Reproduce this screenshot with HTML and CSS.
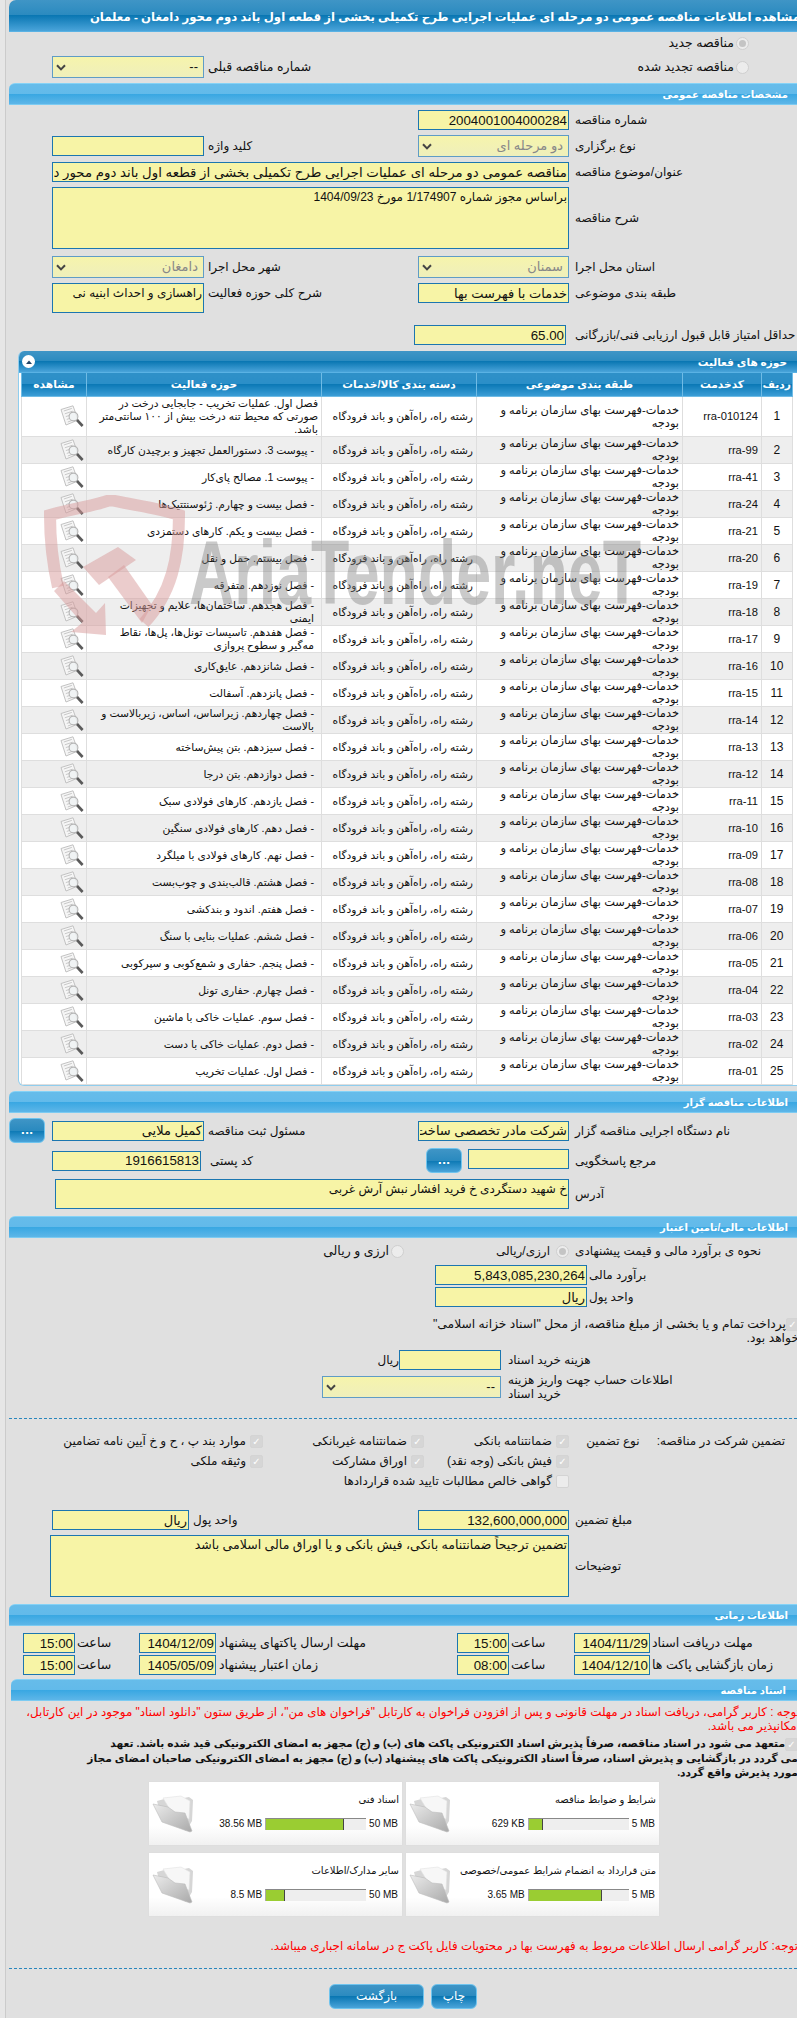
FILE: index.html
```html
<!DOCTYPE html>
<html lang="fa" dir="rtl">
<head>
<meta charset="utf-8">
<title>مشاهده اطلاعات مناقصه</title>
<link rel="stylesheet" href="styles.css">
</head>
<body>
<svg class="defs" width="0" height="0" aria-hidden="true">
  <defs>
    <linearGradient id="fg" x1="0" y1="0" x2="1" y2="1"><stop offset="0" stop-color="#ececec"/><stop offset="1" stop-color="#a9a9a9"/></linearGradient>
    <symbol id="chev" viewBox="0 0 10 7"><path d="M1 1.2 5 5.4 9 1.2" fill="none" stroke="#444" stroke-width="2"/></symbol>
    <symbol id="glass" viewBox="0 0 24 23">
      <path d="M1 4.5 13 .8 18 15 6 20Z" fill="#f6f6f6" stroke="#c2c2c2"/>
      <path d="M3.8 6 11.8 3.4M4.8 8.8 12.6 6.2M5.8 11.6 9.4 10.4M6.8 14.4 9.6 13.5M7.8 17 12 15.5" stroke="#c8c8c8" fill="none"/>
      <circle cx="13.5" cy="11.5" r="4.4" fill="#eef2f3" fill-opacity=".75" stroke="#b4b4b4" stroke-width="1.1"/>
      <path d="M17 15 22.6 21" stroke="#5a5a5a" stroke-width="2.6"/>
    </symbol>
    <symbol id="folder" viewBox="0 0 42 38">
      <path d="M5 6 16 3 22 5 37 2 41 5 40 26 34 36 9 22Z" fill="#d6d6d6"/>
      <path d="M11 3 29 1 38 6 37 24 20 18Z" fill="#f7f7f7" stroke="#e2e2e2" stroke-width=".6"/>
      <path d="M1 9 16 12 23 17 33 18 40 36 38 37 10 27Z" fill="url(#fg)" stroke="#bcbcbc" stroke-width=".6"/>
    </symbol>
  </defs>
</svg>
<div class="shell">
<main class="wrap">
  <h1 class="bar bar-dark title">مشاهده اطلاعات مناقصه عمومی دو مرحله ای عملیات اجرایی طرح تکمیلی بخشی از قطعه اول باند دوم محور دامغان - معلمان</h1>

  <div class="row radio-first"><span class="rd on"></span><span class="rd-text">مناقصه جدید</span></div>
  <div class="row radio-second">
    <span class="rd"></span><span class="rd-text">مناقصه تجدید شده</span>
    <div class="prev">
      <span class="rd-label">شماره مناقصه قبلی</span>
      <div class="select w152"><span>--</span><svg><use href="#chev"/></svg></div>
    </div>
  </div>

  <h2 class="bar bar-light sect-first">مشخصات مناقصه عمومی</h2>

  <div class="row m5"><label class="lb">شماره مناقصه</label><input class="in w151 num" readonly value="2004001004000284"></div>
  <div class="row m5"><label class="lb">نوع برگزاری</label><div class="select w151 off"><span>دو مرحله ای</span><svg><use href="#chev"/></svg></div><label class="lb2">کلید واژه</label><input class="in w152" readonly></div>
  <div class="row m5"><label class="lb">عنوان/موضوع مناقصه</label><input class="in w517 subject" readonly value="مناقصه عمومی دو مرحله ای عملیات اجرایی طرح تکمیلی بخشی از قطعه اول باند دوم محور دامغان - معلمان"></div>
  <div class="row m5"><label class="lb">شرح مناقصه</label><textarea class="in w517 h62" readonly>براساس مجوز شماره 1/174907 مورخ 1404/09/23</textarea></div>
  <div class="row m7"><label class="lb">استان محل اجرا</label><div class="select w151 off"><span>سمنان</span><svg><use href="#chev"/></svg></div><label class="lb2">شهر محل اجرا</label><div class="select w152 off"><span>دامغان</span><svg><use href="#chev"/></svg></div></div>
  <div class="row m5 top"><label class="lb">طبقه بندی موضوعی</label><input class="in w151" readonly value="خدمات با فهرست بها"><label class="lb2">شرح کلی حوزه فعالیت</label><textarea class="in w152 h30" readonly>راهسازی و احداث ابنیه نی</textarea></div>
  <div class="row m12"><label class="lb score-lb">حداقل امتیاز قابل قبول ارزیابی فنی/بازرگانی</label><input class="in w152 num" readonly value="65.00"></div>

  <section class="panel">
    <div class="bar-dark panel-head"><span>حوزه های فعالیت</span><span class="toggle"><svg viewBox="0 0 8 6" width="8" height="6"><path d="M1 5 4 1.5 7 5Z" fill="#246"/></svg></span></div>
    <table class="grid">
      <colgroup><col class="c1"><col class="c2"><col class="c3"><col class="c4"><col class="c5"><col class="c6"></colgroup>
      <thead><tr><th>ردیف</th><th>کدخدمت</th><th>طبقه بندی موضوعی</th><th>دسته بندی کالا/خدمات</th><th>حوزه فعالیت</th><th>مشاهده</th></tr></thead>
      <tbody>
        <tr><td class="n">1</td><td class="code">rra-010124</td><td>خدمات-فهرست بهای سازمان برنامه و<br>بودجه</td><td>رشته راه، راه‌آهن و باند فرودگاه</td><td>فصل اول. عملیات تخریب - جابجایی درخت در<br>صورتی که محیط تنه درخت بیش از ۱۰۰ سانتی‌متر<br>باشد.</td><td class="ic"><svg><use href="#glass"/></svg></td></tr>
        <tr><td class="n">2</td><td class="code">rra-99</td><td>خدمات-فهرست بهای سازمان برنامه و<br>بودجه</td><td>رشته راه، راه‌آهن و باند فرودگاه</td><td class="a">- پیوست 3. دستورالعمل تجهیز و برچیدن کارگاه</td><td class="ic"><svg><use href="#glass"/></svg></td></tr>
        <tr><td class="n">3</td><td class="code">rra-41</td><td>خدمات-فهرست بهای سازمان برنامه و<br>بودجه</td><td>رشته راه، راه‌آهن و باند فرودگاه</td><td class="a">- پیوست 1. مصالح پای‌کار</td><td class="ic"><svg><use href="#glass"/></svg></td></tr>
        <tr><td class="n">4</td><td class="code">rra-24</td><td>خدمات-فهرست بهای سازمان برنامه و<br>بودجه</td><td>رشته راه، راه‌آهن و باند فرودگاه</td><td class="a">- فصل بیست و چهارم. ژئوسنتتیک‌ها</td><td class="ic"><svg><use href="#glass"/></svg></td></tr>
        <tr><td class="n">5</td><td class="code">rra-21</td><td>خدمات-فهرست بهای سازمان برنامه و<br>بودجه</td><td>رشته راه، راه‌آهن و باند فرودگاه</td><td class="a">- فصل بیست و یکم. کارهای دستمزدی</td><td class="ic"><svg><use href="#glass"/></svg></td></tr>
        <tr><td class="n">6</td><td class="code">rra-20</td><td>خدمات-فهرست بهای سازمان برنامه و<br>بودجه</td><td>رشته راه، راه‌آهن و باند فرودگاه</td><td class="a">- فصل بیستم. حمل و نقل</td><td class="ic"><svg><use href="#glass"/></svg></td></tr>
        <tr><td class="n">7</td><td class="code">rra-19</td><td>خدمات-فهرست بهای سازمان برنامه و<br>بودجه</td><td>رشته راه، راه‌آهن و باند فرودگاه</td><td class="a">- فصل نوزدهم. متفرقه</td><td class="ic"><svg><use href="#glass"/></svg></td></tr>
        <tr><td class="n">8</td><td class="code">rra-18</td><td>خدمات-فهرست بهای سازمان برنامه و<br>بودجه</td><td>رشته راه، راه‌آهن و باند فرودگاه</td><td class="w">- فصل هجدهم. ساختمان‌ها، علایم و تجهیزات<br>ایمنی</td><td class="ic"><svg><use href="#glass"/></svg></td></tr>
        <tr><td class="n">9</td><td class="code">rra-17</td><td>خدمات-فهرست بهای سازمان برنامه و<br>بودجه</td><td>رشته راه، راه‌آهن و باند فرودگاه</td><td class="w">- فصل هفدهم. تاسیسات تونل‌ها، پل‌ها، نقاط<br>مه‌گیر و سطوح پروازی</td><td class="ic"><svg><use href="#glass"/></svg></td></tr>
        <tr><td class="n">10</td><td class="code">rra-16</td><td>خدمات-فهرست بهای سازمان برنامه و<br>بودجه</td><td>رشته راه، راه‌آهن و باند فرودگاه</td><td class="a">- فصل شانزدهم. عایق‌کاری</td><td class="ic"><svg><use href="#glass"/></svg></td></tr>
        <tr><td class="n">11</td><td class="code">rra-15</td><td>خدمات-فهرست بهای سازمان برنامه و<br>بودجه</td><td>رشته راه، راه‌آهن و باند فرودگاه</td><td class="a">- فصل پانزدهم. آسفالت</td><td class="ic"><svg><use href="#glass"/></svg></td></tr>
        <tr><td class="n">12</td><td class="code">rra-14</td><td>خدمات-فهرست بهای سازمان برنامه و<br>بودجه</td><td>رشته راه، راه‌آهن و باند فرودگاه</td><td class="w">- فصل چهاردهم. زیراساس، اساس، زیربالاست و<br>بالاست</td><td class="ic"><svg><use href="#glass"/></svg></td></tr>
        <tr><td class="n">13</td><td class="code">rra-13</td><td>خدمات-فهرست بهای سازمان برنامه و<br>بودجه</td><td>رشته راه، راه‌آهن و باند فرودگاه</td><td class="a">- فصل سیزدهم. بتن پیش‌ساخته</td><td class="ic"><svg><use href="#glass"/></svg></td></tr>
        <tr><td class="n">14</td><td class="code">rra-12</td><td>خدمات-فهرست بهای سازمان برنامه و<br>بودجه</td><td>رشته راه، راه‌آهن و باند فرودگاه</td><td class="a">- فصل دوازدهم. بتن درجا</td><td class="ic"><svg><use href="#glass"/></svg></td></tr>
        <tr><td class="n">15</td><td class="code">rra-11</td><td>خدمات-فهرست بهای سازمان برنامه و<br>بودجه</td><td>رشته راه، راه‌آهن و باند فرودگاه</td><td class="a">- فصل یازدهم. کارهای فولادی سبک</td><td class="ic"><svg><use href="#glass"/></svg></td></tr>
        <tr><td class="n">16</td><td class="code">rra-10</td><td>خدمات-فهرست بهای سازمان برنامه و<br>بودجه</td><td>رشته راه، راه‌آهن و باند فرودگاه</td><td class="a">- فصل دهم. کارهای فولادی سنگین</td><td class="ic"><svg><use href="#glass"/></svg></td></tr>
        <tr><td class="n">17</td><td class="code">rra-09</td><td>خدمات-فهرست بهای سازمان برنامه و<br>بودجه</td><td>رشته راه، راه‌آهن و باند فرودگاه</td><td class="a">- فصل نهم. کارهای فولادی با میلگرد</td><td class="ic"><svg><use href="#glass"/></svg></td></tr>
        <tr><td class="n">18</td><td class="code">rra-08</td><td>خدمات-فهرست بهای سازمان برنامه و<br>بودجه</td><td>رشته راه، راه‌آهن و باند فرودگاه</td><td class="a">- فصل هشتم. قالب‌بندی و چوب‌بست</td><td class="ic"><svg><use href="#glass"/></svg></td></tr>
        <tr><td class="n">19</td><td class="code">rra-07</td><td>خدمات-فهرست بهای سازمان برنامه و<br>بودجه</td><td>رشته راه، راه‌آهن و باند فرودگاه</td><td class="a">- فصل هفتم. اندود و بندکشی</td><td class="ic"><svg><use href="#glass"/></svg></td></tr>
        <tr><td class="n">20</td><td class="code">rra-06</td><td>خدمات-فهرست بهای سازمان برنامه و<br>بودجه</td><td>رشته راه، راه‌آهن و باند فرودگاه</td><td class="a">- فصل ششم. عملیات بنایی با سنگ</td><td class="ic"><svg><use href="#glass"/></svg></td></tr>
        <tr><td class="n">21</td><td class="code">rra-05</td><td>خدمات-فهرست بهای سازمان برنامه و<br>بودجه</td><td>رشته راه، راه‌آهن و باند فرودگاه</td><td class="a">- فصل پنجم. حفاری و شمع‌کوبی و سپرکوبی</td><td class="ic"><svg><use href="#glass"/></svg></td></tr>
        <tr><td class="n">22</td><td class="code">rra-04</td><td>خدمات-فهرست بهای سازمان برنامه و<br>بودجه</td><td>رشته راه، راه‌آهن و باند فرودگاه</td><td class="a">- فصل چهارم. حفاری تونل</td><td class="ic"><svg><use href="#glass"/></svg></td></tr>
        <tr><td class="n">23</td><td class="code">rra-03</td><td>خدمات-فهرست بهای سازمان برنامه و<br>بودجه</td><td>رشته راه، راه‌آهن و باند فرودگاه</td><td class="a">- فصل سوم. عملیات خاکی با ماشین</td><td class="ic"><svg><use href="#glass"/></svg></td></tr>
        <tr><td class="n">24</td><td class="code">rra-02</td><td>خدمات-فهرست بهای سازمان برنامه و<br>بودجه</td><td>رشته راه، راه‌آهن و باند فرودگاه</td><td class="a">- فصل دوم. عملیات خاکی با دست</td><td class="ic"><svg><use href="#glass"/></svg></td></tr>
        <tr><td class="n">25</td><td class="code">rra-01</td><td>خدمات-فهرست بهای سازمان برنامه و<br>بودجه</td><td>رشته راه، راه‌آهن و باند فرودگاه</td><td class="a">- فصل اول. عملیات تخریب</td><td class="ic"><svg><use href="#glass"/></svg></td></tr>
      </tbody>
    </table>
  </section>

  <h2 class="bar bar-light m5">اطلاعات مناقصه گزار</h2>
  <div class="row m5 h25"><label class="lb">نام دستگاه اجرایی مناقصه گزار</label><input class="in w151" readonly value="شرکت مادر تخصصی ساخت و توسعه"><label class="lb2">مسئول ثبت مناقصه</label><input class="in w152" readonly value="کمیل ملایی"><button class="btn dots gap7">...</button></div>
  <div class="row m5 h25"><label class="lb">مرجع پاسخگویی</label><input class="in w101 up" readonly><button class="btn dots gap6">...</button><label class="lb-post">کد پستی</label><input class="in w149 num" readonly value="1916615813"></div>
  <div class="row m6 top"><label class="lb lb-addr">آدرس</label><textarea class="in w514 h30" readonly>خ شهید دستگردی خ فرید افشار نبش آرش غربی</textarea></div>

  <h2 class="bar bar-light m7">اطلاعات مالی/تامین اعتبار</h2>
  <div class="row m6 h14"><label class="lb">نحوه ی برآورد مالی و قیمت پیشنهادی</label><span class="rd on rd-a"></span><span class="rd-mid">ارزی/ریالی</span><span class="rd"></span><span class="rd-text">ارزی و ریالی</span></div>
  <div class="row m7"><label class="lb3">برآورد مالی</label><input class="in w152 num" readonly value="5,843,085,230,264"></div>
  <div class="row m2"><label class="lb3">واحد پول</label><input class="in w152" readonly value="ریال"></div>
  <p class="pay"><span class="cb on">✓</span>پرداخت تمام و یا بخشی از مبلغ مناقصه، از محل "اسناد خزانه اسلامی"<br>خواهد بود.</p>
  <div class="row m5"><label class="lb4">هزینه خرید اسناد</label><input class="in w102" readonly><span class="unit">ریال</span></div>
  <div class="row m3"><label class="lb4 two">اطلاعات حساب جهت واریز هزینه<br>خرید اسناد</label><div class="select w179"><span>--</span><svg><use href="#chev"/></svg></div></div>

  <hr class="dash d1">

  <div class="row opts first">
    <div class="opt-head"><span>تضمین شرکت در مناقصه:</span><span class="kind">نوع تضمین</span></div>
    <div class="opt o1"><span class="cb on">✓</span>ضمانتنامه بانکی</div>
    <div class="opt o2"><span class="cb on">✓</span>ضمانتنامه غیربانکی</div>
    <div class="opt"><span class="cb on">✓</span>موارد بند پ ، ح و خ آیین نامه تضامین</div>
  </div>
  <div class="row opts">
    <div class="opt-head"></div>
    <div class="opt o1"><span class="cb on">✓</span>فیش بانکی (وجه نقد)</div>
    <div class="opt o2"><span class="cb on">✓</span>اوراق مشارکت</div>
    <div class="opt"><span class="cb on">✓</span>وثیقه ملکی</div>
  </div>
  <div class="row opts">
    <div class="opt-head"></div>
    <div class="opt"><span class="cb"></span>گواهی خالص مطالبات تایید شده قراردادها</div>
  </div>

  <div class="row m19"><label class="lb">مبلغ تضمین</label><input class="in w151 num" readonly value="132,600,000,000"><label class="lb5">واحد پول</label><input class="in w137" readonly value="ریال"></div>
  <div class="row m5"><label class="lb">توضیحات</label><textarea class="in w519 h62 wide" readonly>تضمین ترجیحاً ضمانتنامه بانکی، فیش بانکی و یا اوراق مالی اسلامی باشد</textarea></div>

  <h2 class="bar bar-light m7">اطلاعات زمانی</h2>
  <div class="row m7 times"><label class="tl">مهلت دریافت اسناد</label><input class="in w76 num" readonly value="1404/11/29"><label class="th1">ساعت</label><input class="in w52 num" readonly value="15:00"><label class="tl2">مهلت ارسال پاکتهای پیشنهاد</label><input class="in w77 num" readonly value="1404/12/09"><label class="th2">ساعت</label><input class="in w52 num" readonly value="15:00"></div>
  <div class="row m2 times"><label class="tl">زمان بازگشایی پاکت ها</label><input class="in w76 num" readonly value="1404/12/10"><label class="th1">ساعت</label><input class="in w52 num" readonly value="08:00"><label class="tl2">زمان اعتبار پیشنهاد</label><input class="in w77 num" readonly value="1405/05/09"><label class="th2">ساعت</label><input class="in w52 num" readonly value="15:00"></div>

  <h2 class="bar bar-light bar-docs">اسناد مناقصه</h2>
  <p class="red note1">توجه : کاربر گرامی، دریافت اسناد در مهلت قانونی و پس از افزودن فراخوان به کارتابل "فراخوان های من"، از طریق ستون "دانلود اسناد" موجود در این کارتابل،<br>امکانپذیر می باشد.</p>
  <p class="bold"><span class="cb on">✓</span>متعهد می شود در اسناد مناقصه، صرفاً پذیرش اسناد الکترونیکی پاکت های (ب) و (ج) مجهز به امضای الکترونیکی قید شده باشد. تعهد<br>می گردد در بازگشایی و پذیرش اسناد، صرفاً اسناد الکترونیکی پاکت های پیشنهاد (ب) و (ج) مجهز به امضای الکترونیکی صاحبان امضای مجاز<br>مورد پذیرش واقع گردد.</p>

  <div class="cards">
    <article class="card"><div class="info"><div class="name">شرایط و ضوابط مناقصه</div><div class="stat"><span>5 MB</span><div class="track"><div class="fill p14"></div></div><span>629 KB</span></div></div><svg class="fold"><use href="#folder"/></svg></article>
    <article class="card"><div class="info"><div class="name">اسناد فنی</div><div class="stat"><span>50 MB</span><div class="track"><div class="fill p78"></div></div><span>38.56 MB</span></div></div><svg class="fold"><use href="#folder"/></svg></article>
    <article class="card"><div class="info"><div class="name">متن قرارداد به انضمام شرایط عمومی/خصوصی</div><div class="stat"><span>5 MB</span><div class="track"><div class="fill p73"></div></div><span>3.65 MB</span></div></div><svg class="fold"><use href="#folder"/></svg></article>
    <article class="card"><div class="info"><div class="name">سایر مدارک/اطلاعات</div><div class="stat"><span>50 MB</span><div class="track"><div class="fill p19"></div></div><span>8.5 MB</span></div></div><svg class="fold"><use href="#folder"/></svg></article>
  </div>

  <p class="red note2">توجه: کاربر گرامی ارسال اطلاعات مربوط به فهرست بها در محتویات فایل پاکت ج در سامانه اجباری میباشد.</p>
  <hr class="dash d2">
  <div class="actions"><button class="btn print">چاپ</button><button class="btn back">بازگشت</button></div>
</main>
</div>

<svg class="mark" viewBox="0 0 610 170" width="610" height="170" aria-hidden="true">
  <path class="pink-line" d="M18 92C12 66 10 44 10 20 40 12 58 10 70 5 92 10 120 13 139 20 139 62 132 98 104 128"/>
  <path class="pink" d="M43 72 78 52 96 65 59 90Z"/>
  <path class="pink" d="M68 82 84 70 112 110 102 128Z"/>
  <path class="pink" d="M14 96 24 86 56 118 65 108 66 140 31 137 42 128Z"/>
  <text class="mark-text" x="149" y="109" textLength="452" lengthAdjust="spacingAndGlyphs" direction="ltr">AriaTender.neT</text>
</svg>
</body>
</html>
```

FILE: styles.css
```css
* { box-sizing: border-box; }
html { overflow: hidden; }
body {
  margin: 0;
  width: 802px;
  height: 2018px;
  overflow: hidden;
  background: #e6e6e6;
  font-family: "Liberation Sans", "DejaVu Sans", sans-serif;
  font-size: 12px;
  line-height: 14px;
  color: #111;
  position: relative;
  direction: rtl;
}
.defs { position: absolute; }
.shell { margin-left: 5px; border-left: 1px solid #cbcbcb; background: #e0e0e0; height: 2018px; }
.wrap { padding-left: 3px; white-space: nowrap; }

/* bars */
.bar { margin: 0; color: #fff; font-weight: bold; display: block; }
.bar-dark {
  background: linear-gradient(#3f95c6, #2a8abf 50%, #0a77b3 50%, #4aa4da);
  border-bottom: 1px solid #5ab2e4;
}
.title { height: 32px; border-radius: 7px 0 0 0; font-size: 11.7px; line-height: 33px; padding-right: 2px; overflow: hidden; }
.bar-light {
  height: 22px;
  font-size: 10px;
  line-height: 22px;
  padding-right: 14px;
  border-top: 1px solid #85d2f6;
  border-bottom: 1px solid #7ccbf2;
  border-radius: 6px 0 0 0;
  background: linear-gradient(#66bcea, #62baea 50%, #38a7e2 50%, #5db6e8);
}
.sect-first { margin-top: 5px; }
.bar-docs { margin: 4px 0 0 2px; padding-right: 16px; }

/* rows */
.row { display: flex; align-items: center; }
.top { align-items: flex-start; }
.m2 { margin-top: 2px; } .m3 { margin-top: 3px; } .m5 { margin-top: 5px; } .m6 { margin-top: 6px; }
.m7 { margin-top: 7px; } .m12 { margin-top: 12px; } .m19 { margin-top: 19px; }
.h25 { height: 25px; } .h14 { height: 14px; }

.lb { width: 227px; margin-left: 6px; text-align: left; line-height: 20px; flex: none; }
.score-lb { margin-left: 9px; }
.lb2 { width: 210px; margin-left: 4px; text-align: left; line-height: 20px; flex: none; }
.lb3 { width: 213px; margin-left: 2px; text-align: left; flex: none; }
.lb4 { width: 294px; margin-left: 7px; text-align: left; flex: none; }
.lb5 { width: 225px; margin-left: 4px; text-align: left; flex: none; }
.lb-post { width: 216px; margin-left: 9px; text-align: left; flex: none; }
.lb-addr { padding-top: 5px; }

.in {
  display: block;
  flex: none;
  height: 20px;
  border: 1px solid #1c76b0;
  background: #f7f4a6;
  font: 13px/15px "Liberation Sans", "DejaVu Sans", sans-serif;
  color: #111;
  padding: 0 1px;
  margin: 0;
  direction: rtl;
  text-align: right;
  resize: none;
  overflow: hidden;
  outline: none;
  border-radius: 0;
}
textarea.in { white-space: pre-wrap; padding-top: 2px; font-size: 12px; }
textarea.wide { font-size: 12.5px; }
.subject { font-size: 13.3px; }
.num { font-size: 13.3px; }
.w52 { width: 52px; } .w76 { width: 76px; } .w77 { width: 77px; } .w101 { width: 101px; }
.w102 { width: 102px; } .w137 { width: 137px; } .w149 { width: 149px; } .w151 { width: 151px; }
.w152 { width: 152px; } .w179 { width: 179px; } .w514 { width: 514px; } .w517 { width: 517px; } .w519 { width: 519px; }
.h30 { height: 30px; } .h62 { height: 62px; }
.up { align-self: flex-start; margin-top: 1px; }

.select {
  height: 22px;
  flex: none;
  display: flex;
  align-items: center;
  justify-content: space-between;
  border: 1px solid #5f9cc6;
  background: linear-gradient(#f6f4ac, #efefbb);
  padding: 0 5px 0 3px;
  font-size: 13px;
}
.select svg { width: 10px; height: 7px; }
.off { color: #888; }

/* radios + checks */
.rd { width: 13px; height: 13px; flex: none; border-radius: 50%; border: 1px solid #cfcfcf; background: #ececec; display: block; position: relative; }
.rd.on::after { content: ""; position: absolute; inset: 2px; border-radius: 50%; background: #c4c4c4; }
.rd-text { margin-right: 2px; font-size: 12.5px; }
.rd-label { font-size: 12.5px; }
.radio-first { margin-top: 4px; height: 14px; padding-right: 53px; }
.radio-second { margin-top: 6px; padding-right: 53px; }
.prev { margin-right: auto; margin-left: 43px; display: flex; align-items: center; gap: 4px; }
.rd-a { margin-left: 3px; }
.rd-mid { width: 56px; margin-left: 93px; text-align: right; flex: none; padding-right: 3px; }
.cb { display: inline-block; width: 13px; height: 13px; border: 1px solid #d4d4d4; border-radius: 2px; background: #ececec; color: #e0e0e0; font-size: 10px; line-height: 12px; text-align: center; vertical-align: middle; overflow: hidden; flex: none; }
.cb.on { background: #d6d6d6; color: #fff; font-weight: bold; }

.pay { margin: 10px 0 0; padding-right: 3px; line-height: 14px; font-size: 12.3px; }
.two { line-height: 14px; }

.dash { border: 0; border-top: 1px dashed #2a87bd; margin: 0; }
.d1 { margin-top: 17px; }
.d2 { margin-top: 15px; }

.opts { height: 20px; }
.opts.first { margin-top: 12px; }
.opt-head { width: 233px; flex: none; padding-right: 17px; display: flex; gap: 17px; }
.opt { display: flex; align-items: center; gap: 4px; flex: none; }
.o1 { width: 145px; } .o2 { width: 161px; }

.times label { font-size: 12.6px; }
.tl { width: 150px; margin-left: 2px; text-align: left; flex: none; }
.th1 { width: 63px; margin-left: 2px; text-align: left; flex: none; }
.tl2 { width: 238px; margin-left: 3px; text-align: left; flex: none; }
.th2 { width: 62px; margin-left: 2px; text-align: left; flex: none; }

/* activity panel */
.panel { margin: 6px 0 0 9px; background: #fff; border: 1px solid #8fcdee; border-top: 0; border-radius: 6px 0 0 6px; overflow: hidden; height: 735px; }
.panel-head { height: 22px; display: flex; align-items: center; justify-content: space-between; color: #fff; font-weight: bold; font-size: 10.5px; padding: 0 14px 0 3px; }
.toggle { width: 13px; height: 13px; border-radius: 50%; background: #fff; display: flex; align-items: center; justify-content: center; }
.grid { width: 770.5px; margin-left: 2px; margin-right: auto; table-layout: fixed; border-collapse: collapse; font-size: 10.7px; line-height: 13px; white-space: normal; }
.c1 { width: 30.5px; } .c2 { width: 79px; } .c3 { width: 206px; } .c4 { width: 155px; } .c5 { width: 235px; } .c6 { width: 65px; }
.grid th { height: 23.7px; padding: 0; color: #fff; font-size: 10.7px; font-weight: bold; text-align: center; border: 1px solid #6fbbe5; border-top: 0; background: linear-gradient(#2f90c8, #2a8ec8 50%, #0c79b6 50%, #3b9dd6); }
.grid td { padding: 0 3px; height: 27px; border: 1px solid #dedede; border-top: 0; text-align: right; vertical-align: middle; }
.grid td:nth-child(3) { white-space: nowrap; font-size: 11.4px; }
.grid td:nth-child(4) { white-space: nowrap; font-size: 10.7px; }
.grid tbody tr:nth-child(even) td { background: #eee; }
.grid .a { padding-right: 7px; }
.grid .w { padding-right: 7px; }
.grid .n { text-align: center; font-size: 12px; }
.grid .code { font-size: 11.2px; }
.grid .ic { padding: 0; }
.ic svg { width: 24px; height: 23px; display: block; margin-left: auto; margin-right: 2px; }

/* buttons */
.btn {
  flex: none;
  display: block;
  padding: 0;
  border: 1px solid #6fc4ee;
  border-radius: 6px;
  color: #fff;
  font: 11px "DejaVu Sans", sans-serif;
  background: linear-gradient(#3f95c6, #2a8abf 50%, #0a77b3 50%, #4aa4da);
}
.dots { width: 36px; height: 25px; font-weight: bold; }
.gap7 { margin-right: 7px; }
.gap6 { margin-right: 6px; }

/* documents */
.red { color: #f00; margin: 0; font-size: 11.9px; }
.note1 { margin-top: 4px; padding-right: 2px; }
.note2 { margin-top: 23px; padding-right: 4px; }
.bold { margin: 3px 0 0; padding-right: 4px; font-weight: bold; font-size: 10.7px; }
.cards { display: grid; grid-template-columns: 253px 253px; grid-auto-rows: 63px; gap: 8px 4px; margin: 3px 143px 0 0; width: 510px; }
.card { display: flex; justify-content: space-between; background: linear-gradient(#fff 70%, #f1f1f1); box-shadow: 0 0 1px #d4d4d4; }
.info { flex: 1; padding: 11px 3px 0 0; font-size: 10px; }
.name { line-height: 14px; }
.stat { display: flex; align-items: center; gap: 3px; margin-top: 10px; padding-right: 1px; font-size: 10px; }
.stat span { direction: ltr; unicode-bidi: isolate; }
.track { width: 101px; height: 12px; background: #eee; border-top: 1px solid #888; border-left: 1px solid #aaa; direction: ltr; }
.fill { height: 100%; background: #9acd32; border-right: 1px solid #444; }
.p14 { width: 14%; } .p78 { width: 78%; } .p73 { width: 73%; } .p19 { width: 19%; }
.fold { width: 42px; height: 38px; flex: none; margin: 13px 0 0 3px; }

.actions { display: flex; margin: 15px 325px 0 0; gap: 7px; }
.print { width: 46px; height: 25px; font-size: 12px; }
.back { width: 95px; height: 25px; font-size: 12px; }

/* watermark laid over the page */
.mark { position: absolute; left: 40px; top: 495px; pointer-events: none; direction: ltr; }
.pink-line { fill: none; stroke: #d89a9a; stroke-opacity: .5; stroke-width: 12; }
.pink { fill: #d89a9a; fill-opacity: .5; }
.mark-text { font-family: "Liberation Sans", sans-serif; font-weight: bold; font-size: 90px; fill: #808080; fill-opacity: .42; }
```
